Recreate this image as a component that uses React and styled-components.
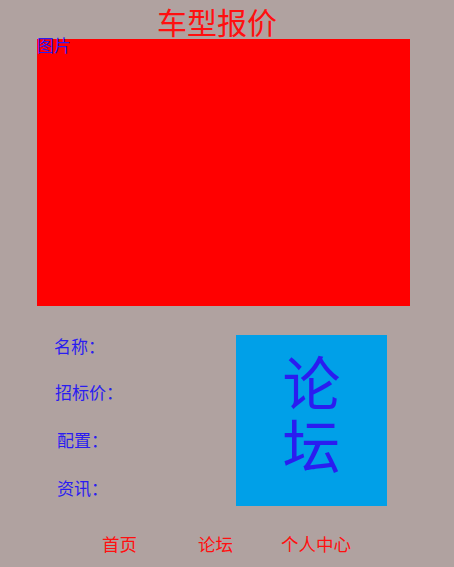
import React from "react";
import styled, { createGlobalStyle } from "styled-components";

const Global = createGlobalStyle`
  html, body { margin: 0; padding: 0; background: #b0a2a0; }
  body { font-family: "Noto Sans CJK SC", "Noto Sans", sans-serif; }
`;

const Page = styled.div`
  width: 454px;
  height: 567px;
  background: #b0a2a0;
  overflow: hidden;
`;

const Title = styled.h1`
  margin: 0;
  width: 434px;
  height: 39px;
  font-size: 30px;
  font-weight: 400;
  line-height: 42px;
  color: #ff1010;
  text-align: center;
`;

const Picture = styled.div`
  margin-left: 37px;
  width: 373px;
  height: 267px;
  background: #ff0000;
  color: #2a1df0;
  font-size: 17px;
  line-height: 11px;
`;

const Info = styled.div`
  display: grid;
  grid-template-columns: 236px 151px;
  align-items: start;
`;

const Labels = styled.div`
  display: flex;
  flex-direction: column;
  padding-top: 17px;
  padding-left: 54px;
`;

const Label = styled.div`
  height: ${(p) => p.$h || 47}px;
  line-height: ${(p) => p.$h || 47}px;
  font-size: 17px;
  color: #2a1df0;
  padding-left: ${(p) => p.$indent || 0}px;
`;

const Forum = styled.div`
  margin-top: 29px;
  height: 171px;
  background: #00a0e8;
  color: #2a1df0;
  display: flex;
  flex-direction: column;
  align-items: center;
  padding-top: 14px;
  box-sizing: border-box;
  font-size: 58px;
  line-height: 63px;
`;

const Nav = styled.nav`
  display: grid;
  grid-template-columns: 96px 83px auto;
  padding-left: 102px;
  margin-top: 18px;
`;

const NavItem = styled.a`
  font-size: 17.5px;
  line-height: 30px;
  color: #ff1010;
  text-decoration: none;
`;

export default function App() {
  return (
    <Page>
      <Global />
      <Title>车型报价</Title>
      <Picture>图片</Picture>
      <Info>
        <Labels>
          <Label $h={45}>名称：</Label>
          <Label $indent={1} $h={48}>招标价：</Label>
          <Label $indent={3} $h={48}>配置：</Label>
          <Label $indent={3}>资讯：</Label>
        </Labels>
        <Forum>
          <span>论</span>
          <span>坛</span>
        </Forum>
      </Info>
      <Nav>
        <NavItem>首页</NavItem>
        <NavItem>论坛</NavItem>
        <NavItem>个人中心</NavItem>
      </Nav>
    </Page>
  );
}
